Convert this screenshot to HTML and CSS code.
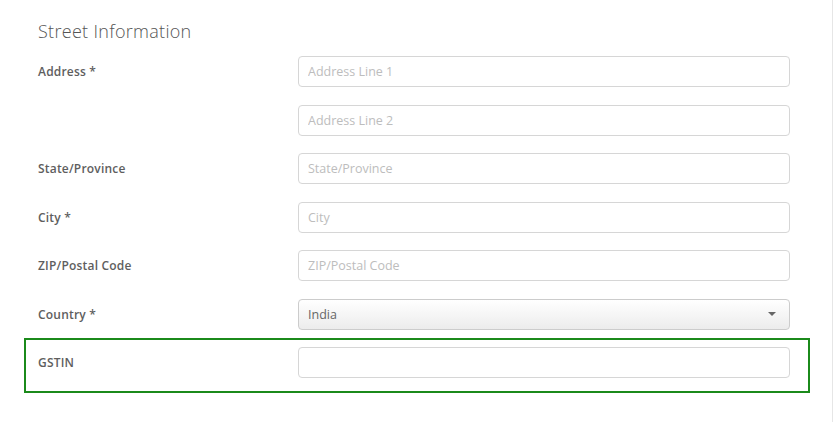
FILE: index.html
```html
<!DOCTYPE html>
<html lang="en">

<head>
    <meta charset="UTF-8">
    <meta name="viewport" content="width=device-width, initial-scale=1.0">
    <title>Street Information</title>
    <link rel="stylesheet" href="styles.css">
</head>

<body>
    <div class="panel">
        <h2 class="title">Street Information</h2>

        <div class="row">
            <label class="label">Address *</label>
            <input class="field" type="text" placeholder="Address Line 1">
        </div>
        <div class="row">
            <label class="label"></label>
            <input class="field" type="text" placeholder="Address Line 2">
        </div>
        <div class="row">
            <label class="label">State/Province</label>
            <input class="field" type="text" placeholder="State/Province">
        </div>
        <div class="row">
            <label class="label">City *</label>
            <input class="field" type="text" placeholder="City">
        </div>
        <div class="row">
            <label class="label">ZIP/Postal Code</label>
            <input class="field" type="text" placeholder="ZIP/Postal Code">
        </div>
        <div class="row">
            <label class="label">Country *</label>
            <div class="select">
                <span>India</span>
                <span class="caret"></span>
            </div>
        </div>
        <div class="row highlight">
            <label class="label">GSTIN</label>
            <input class="field" type="text">
        </div>
    </div>
</body>

</html>
```

FILE: styles.css
```css
* {
    margin: 0;
    padding: 0;
    box-sizing: border-box;
}
body {
    background: #fff;
    font-family: "Open Sans", "Liberation Sans", sans-serif;
    color: #555;
}
.panel {
    width: 833px;
    min-height: 100vh;
    padding: 19px 42px 0 38px;
    border-right: 1px solid #e6e6e6;
    display: flex;
    flex-direction: column;
    gap: 17.5px;
}
.title {
    font-size: 18px;
    font-weight: 300;
    letter-spacing: 0.3px;
    color: #555;
    line-height: 24px;
    margin-bottom: -4.5px;
}
.row {
    display: flex;
    align-items: center;
}
.label {
    width: 260px;
    flex: none;
    font-size: 12px;
    font-weight: 600;
    letter-spacing: 0.2px;
    color: #5e5e5e;
}
.field,
.select {
    width: 492px;
    height: 31px;
    border: 1px solid #d6d6d6;
    border-radius: 4px;
    padding: 0 9px;
    font-family: inherit;
    font-size: 12.5px;
    color: #555;
    background: #fff;
    outline: none;
}
.field::placeholder {
    color: #bdbdbd;
}
.select {
    display: flex;
    align-items: center;
    justify-content: space-between;
    background: linear-gradient(#fff, #ececec);
    border-color: #ccc;
    padding-right: 13px;
    color: #666;
}
.caret {
    width: 0;
    height: 0;
    border-left: 4px solid transparent;
    border-right: 4px solid transparent;
    border-top: 4px solid #666;
}
.highlight {
    margin: -9px -20px 0 -14px;
    padding: 7px 18px 13px 12px;
    border: 2px solid #1b8a1b;
}
```
